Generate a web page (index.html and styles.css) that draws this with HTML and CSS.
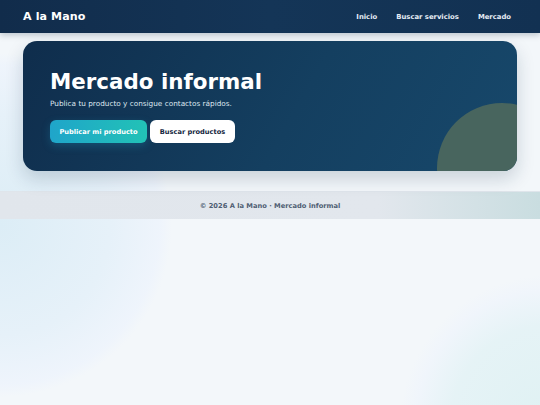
FILE: index.html
```html
<!DOCTYPE html>
<html lang="es">
<head>
<meta charset="utf-8">
<title>A la Mano · Mercado informal</title>
<link rel="stylesheet" href="styles.css">
</head>
<body>
<header class="topbar">
  <div class="brand">A la Mano</div>
  <nav class="nav">
    <a href="#">Inicio</a>
    <a href="#">Buscar servicios</a>
    <a href="#">Mercado</a>
  </nav>
</header>
<main class="main">
  <section class="hero">
    <div class="hero-blob"></div>
    <h1 class="hero-title">Mercado informal</h1>
    <p class="hero-sub">Publica tu producto y consigue contactos rápidos.</p>
    <div class="hero-actions">
      <a href="#" class="btn btn-primary">Publicar mi producto</a>
      <a href="#" class="btn btn-light">Buscar productos</a>
    </div>
  </section>
</main>
<footer class="footer">© 2026 A la Mano · Mercado informal</footer>
</body>
</html>
```
FILE: styles.css
```css
* { box-sizing: border-box; }
html, body { margin: 0; padding: 0; }
body {
  min-height: 405px;
  font-family: "DejaVu Sans", Verdana, sans-serif;
  background:
    radial-gradient(circle at 0 225px, #dcedf6 0, #e6f1f9 110px, rgba(238, 244, 252, 0.9) 160px, rgba(243, 247, 250, 0) 172px),
    radial-gradient(circle at 550px 425px, #dff1f3 0, rgba(226, 242, 245, 0.8) 100px, rgba(238, 244, 252, 0.6) 135px, rgba(243, 247, 250, 0) 150px),
    #f3f7fa;
}
a { text-decoration: none; }
.topbar {
  height: 33px;
  display: flex;
  align-items: center;
  justify-content: space-between;
  padding: 0 29px 0 23px;
  background: linear-gradient(90deg, #112c4b 0%, #143557 50%, #123152 100%);
  box-shadow: 0 2px 6px rgba(15, 42, 71, 0.25);
}
.brand {
  color: #ffffff;
  font-weight: bold;
  font-size: 11.1px;
  letter-spacing: 0.1px;
}
.nav { display: flex; gap: 19px; }
.nav a {
  color: #e6edf5;
  font-weight: bold;
  font-size: 6.85px;
}
.main { padding: 8px 23px 20px; }
.hero {
  position: relative;
  overflow: hidden;
  height: 130px;
  border-radius: 14px;
  padding: 28px 27px;
  background: linear-gradient(120deg, #0f2d4c 0%, #143f60 55%, #17486b 100%);
  box-shadow: 0 8px 18px rgba(15, 42, 71, 0.18);
  color: #fff;
}
.hero-blob {
  position: absolute;
  width: 130px;
  height: 130px;
  border-radius: 50%;
  right: -50px;
  bottom: -62px;
  background: #48655e;
}
.hero-title {
  position: relative;
  margin: 0;
  font-size: 21.4px;
  font-weight: bold;
  line-height: 26px;
}
.hero-sub {
  position: relative;
  margin: 4px 0 0;
  font-size: 7.3px;
  color: #dde6ef;
}
.hero-actions {
  position: relative;
  display: flex;
  gap: 3px;
  margin-top: 12px;
}
.btn {
  height: 23px;
  display: flex;
  align-items: center;
  justify-content: center;
  border-radius: 6px;
  font-size: 6.65px;
  font-weight: bold;
}
.btn-primary {
  width: 97px;
  color: #ffffff;
  background: linear-gradient(90deg, #1fa5ca 0%, #22c2b6 100%);
  box-shadow: 0 3px 8px rgba(31, 165, 202, 0.25);
}
.btn-light {
  width: 85px;
  color: #13263d;
  background: #ffffff;
}
.footer {
  height: 28px;
  display: flex;
  align-items: center;
  justify-content: center;
  font-size: 6.7px;
  font-weight: bold;
  color: #4f5e73;
  background: linear-gradient(90deg, #e1e6ec 0%, #e2e7ed 70%, #c9dde0 100%);
  border-top: 1px solid #dfe5eb;
}
```
